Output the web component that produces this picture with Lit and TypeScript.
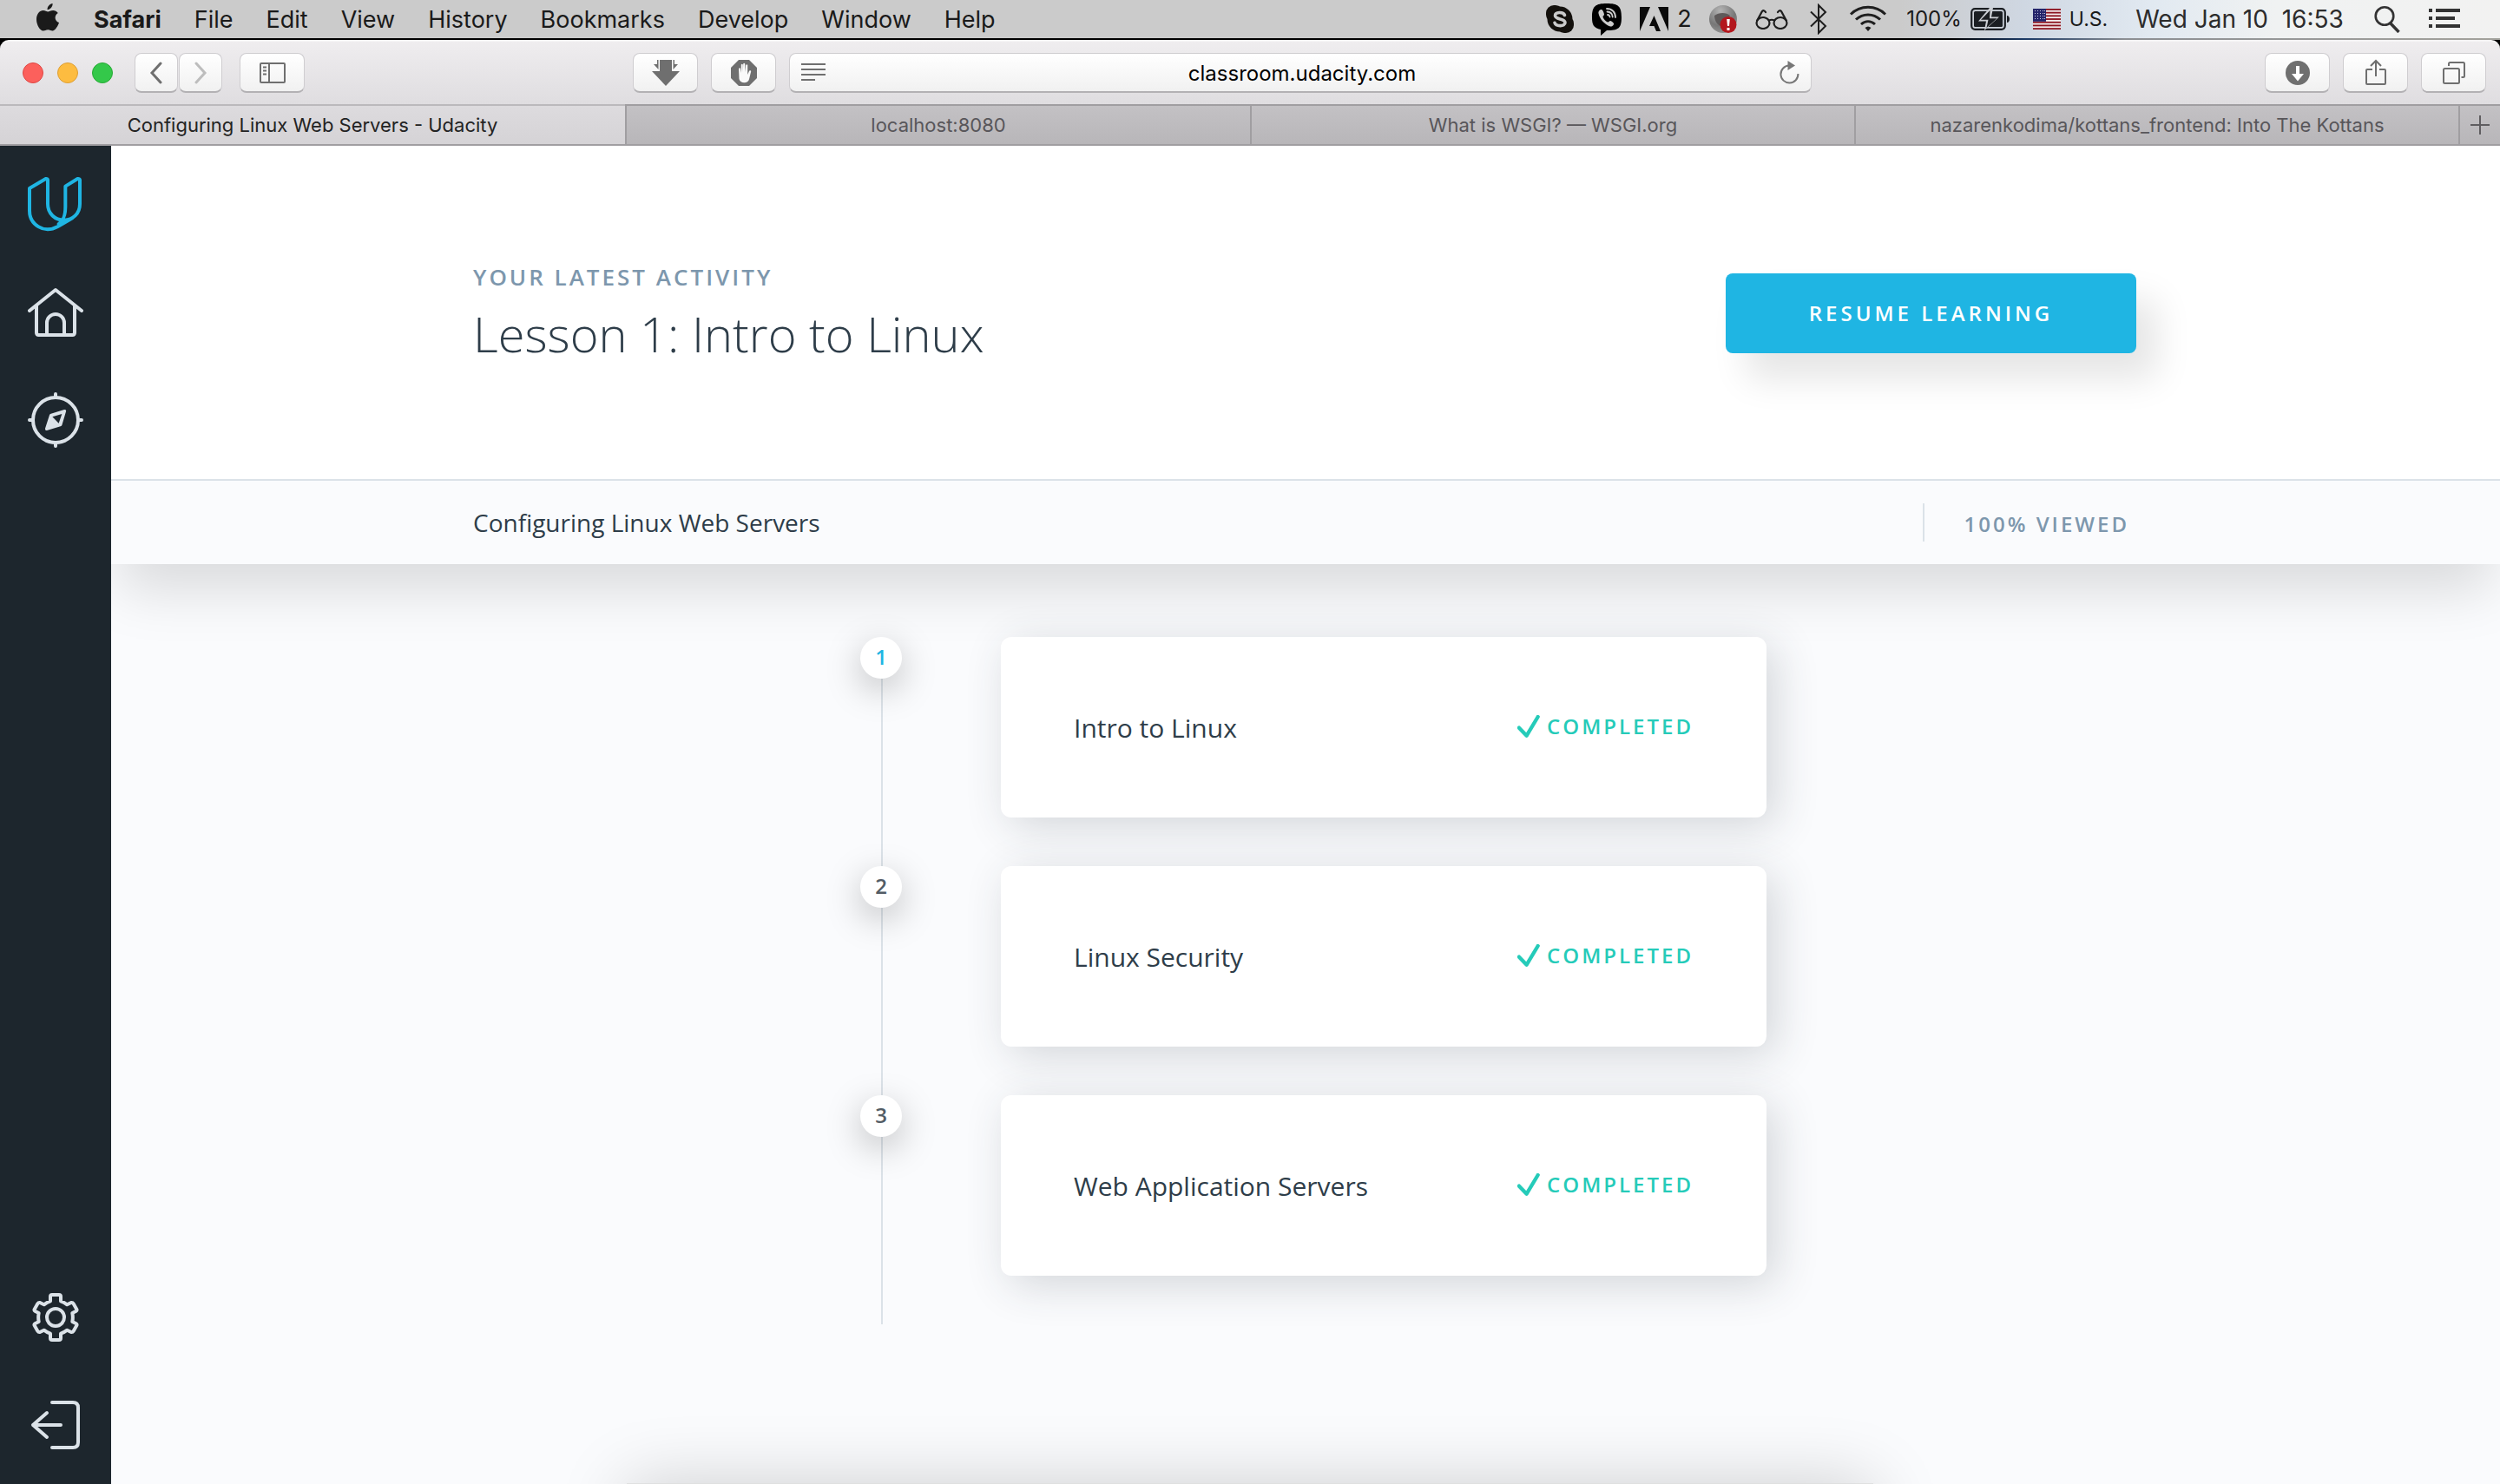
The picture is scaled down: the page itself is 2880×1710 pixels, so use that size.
import { LitElement, html, css, svg } from "lit";
import { customElement, property } from "lit/decorators.js";

const mac = css`Inter, "Liberation Sans", sans-serif`;

@customElement("mac-menubar")
class MacMenubar extends LitElement {
  static styles = css`
    :host { display: block; }
    .bar {
      display: flex; justify-content: space-between; height: 44px;
      font: 27px/46px ${mac}; color: #1a1a1a;
      background: linear-gradient(90deg, #cbcbcb 76%, #cfd7e2 81%, #e1e9f1 86%, #f0f2f2 91%, #f2f2f1 100%);
    }
    .edge { height: 2px; background: linear-gradient(90deg, #000 78%, #1c3a66 81%, #8c8f93 85%, #a3a29c 100%); }
    button { all: unset; white-space: nowrap; cursor: default; }
    .menus { display: flex; gap: 38px; padding-left: 42px; }
    .menus svg { display: block; margin: 4px 2px 0 0; }
    .app { font-weight: 700; }
    .status { display: flex; padding-right: 31px; }
    .cell { display: flex; align-items: center; justify-content: center; gap: 10px; white-space: nowrap; }
    .w48 { width: 48px; }
    .w52 { width: 52px; }
    .w56 { width: 56px; }
    .w60 { width: 60px; }
    .w66 { width: 66px; }
    .adobe { width: 80px; }
    .power { width: 142px; font-size: 24px; }
    .lang { width: 116px; font-size: 23px; }
    .clock { width: 274px; font-size: 28px; color: #2c2c2c; white-space: pre; }
  `;
  render() {
    const items = ["File", "Edit", "View", "History", "Bookmarks", "Develop", "Window", "Help"];
    return html`
      <div class="bar">
        <nav class="menus" aria-label="Menu bar">
          <svg width="26" height="32" viewBox="0 0 26 32" fill="#1a1a1a"><path d="M18.6 0c.3 3.600-2.700 7.200-6 7.200C12.200 3.800 15.400.400 18.600 0zM13.200 9.400c1.200 0 3.400-1.500 6.200-1.400 1.800.100 4.100.900 5.400 3-4.800 3.100-3.900 9.300 1.200 11.100-1.200 3.600-4.100 8.900-7.100 9.400-2.100.200-3-1.300-5.600-1.300s-3.500 1.300-5.500 1.300C4 31.500 0 24.600 0 18.300 0 11.800 3.900 8 7.600 8c2.500 0 4.300 1.400 5.600 1.400z"/></svg>
          <button class="app">Safari</button>
          ${items.map((i) => html`<button>${i}</button>`)}
        </nav>
        <div class="status">
          <span class="cell w52"><svg width="34" height="34" viewBox="0 0 34 34"><rect x="1" y="1" width="20" height="20" rx="9" fill="#14110d"/><rect x="13" y="13" width="20" height="20" rx="9" fill="#14110d"/><circle cx="17" cy="17" r="14.500" fill="#14110d"/><path d="M22.500 12.500C21 8.500 11.500 8.500 11.500 13c0 5 11.500 2.800 11.500 8 0 4.800-10.500 4.800-12 .3" fill="none" stroke="#cbcbcb" stroke-width="3.600" stroke-linecap="round"/></svg></span>
          <span class="cell w56"><svg width="36" height="38" viewBox="0 0 36 38"><path d="M18 1c13 0 17 3 17 16s-4 15-17 15l-7 6v-7C3 29 1 26 1 17 1 4 5 1 18 1z" fill="#000"/><path d="M12 8c-2 0-4 2-3.500 4.500C10 19 15 25 22 27.500c2.500.5 4.500-2 4-3.500-.5-1.200-3-3-4-3s-1.800 2-3 1.500c-2.500-1-4.800-3.500-5.500-6-.3-1.300 1.500-1.500 1.500-2.800S13.200 8 12 8z" fill="#cbcbcb"/><path d="M18 7c6 0 10 4 10 10M18.500 10.500c4 .2 6 2.500 6.200 6M19 14c1.500.2 2.300 1 2.500 2.500" fill="none" stroke="#cbcbcb" stroke-width="1.800" stroke-linecap="round"/></svg></span>
          <span class="cell adobe"><svg width="33" height="28" viewBox="0 0 33 28"><path d="M0 0h12L0 28zM21 0h12v28zM16.500 10L24 28h-5l-2.500-6h-5.500z" fill="#0b0b0b"/></svg>2</span>
          <span class="cell w52"><svg width="32" height="34" viewBox="0 0 32 34"><defs><radialGradient id="ball" cx=".4" cy=".2" r=".9"><stop offset="0" stop-color="#b4b4b4"/><stop offset=".6" stop-color="#777"/><stop offset="1" stop-color="#9a9a9a"/></radialGradient></defs><circle cx="16" cy="17" r="16" fill="url(#ball)"/><path d="M6 13c5-4 14-4 18 0l-7 13C11 26 6 20 6 13z" fill="#5e5a5a"/><circle cx="22" cy="23.500" r="9.500" fill="#b3171d"/><path d="M20.200 17h3.600l-.8 8h-2zM20.500 27h3v3h-3z" fill="#fff"/></svg></span>
          <span class="cell w60"><svg width="38" height="24" viewBox="0 0 38 24" fill="none" stroke="#1e1e1e" stroke-width="2.200" stroke-linecap="round"><ellipse cx="9" cy="16.500" rx="7.500" ry="6.500"/><ellipse cx="29" cy="16.500" rx="7.500" ry="6.500"/><path d="M16 13.500q3-1.500 6 0M2 14L8 3q2-2 4 1M36 14L30 3q-2-2-4 1"/></svg></span>
          <span class="cell w48"><svg width="20" height="36" viewBox="0 0 20 36" fill="none" stroke="#1e1e1e" stroke-width="2"><path d="M1 9.500L18 26l-8 8V2l8 8L1 26.500"/></svg></span>
          <span class="cell w66"><svg width="42" height="32" viewBox="0 0 42 32" fill="none" stroke="#1e1e1e" stroke-width="3"><path d="M1 10.500C12-.5 30-.5 41 10.500M7 16.500c8-7.500 20-7.500 28 0M13 22c5-4.500 11-4.500 16 0"/><path d="M17.500 26q3.500-3 7 0L21 30z" fill="#1e1e1e" stroke="none"/></svg></span>
          <span class="cell power">100%<svg width="46" height="26" viewBox="0 0 46 26"><rect x="1.200" y="1.200" width="38.600" height="23.600" rx="4" fill="none" stroke="#1b1e22" stroke-width="2.200"/><rect x="4" y="4" width="33" height="18" rx="1.500" fill="#1b1e22"/><path d="M42 9c4 0 4 8 0 8z" fill="#1b1e22"/><path d="M22 0L9 15.500h9L16 26l17-15.500h-9L26 0z" fill="#cccfd4"/><path d="M22.500 3L12 13.800h8.500L18.500 23l12-10.800H22z" fill="#1b1e22"/></svg></span>
          <span class="cell lang"><svg width="32" height="24" viewBox="0 0 32 24"><rect width="32" height="24" fill="#f4eeee"/>${[0, 1, 2, 3, 4, 5, 6].map((n) => svg`<rect y=${n * 3.7} width="32" height="1.850" fill="#8c1420"/>`)}<rect width="15" height="14.800" fill="#24246a"/>${[2, 5, 8, 11].map((y) => [2, 5, 8, 11, 13].map((x) => svg`<rect x=${x} y=${y} width="1" height="1" fill="#c8c8e0"/>`))}</svg>U.S.</span>
          <span class="cell clock">Wed Jan 10  16:53</span>
          <span class="cell w66"><svg width="30" height="32" viewBox="0 0 30 32" fill="none" stroke="#333" stroke-width="2.600"><circle cx="12" cy="12.500" r="10.300"/><path d="M18.500 20.500L28.500 31" stroke-width="3.400"/></svg></span>
          <span class="cell w66"><svg width="36" height="24" viewBox="0 0 36 24" fill="#333"><path d="M0 0h4v4H0zM8 0h28v4H8zM0 9h4v4H0zM8 9h22v4H8zM0 18h4v4H0zM8 18h28v4H8z"/></svg></span>
        </div>
      </div>
      <div class="edge"></div>`;
  }
}

@customElement("safari-chrome")
class SafariChrome extends LitElement {
  static styles = css`
    :host { display: block; background: #000; font-family: ${mac}; }
    .toolbar {
      display: grid; grid-template-columns: minmax(0, 703fr) minmax(0, 1358fr) minmax(0, 777fr);
      align-items: center; height: 74px; box-sizing: border-box; padding: 0 16px 0 26px;
      border-top: 2px solid #f6f5f6; border-radius: 10px 10px 0 0;
      background: linear-gradient(#efedef, #dfdde0);
    }
    .left, .middle, .right { display: flex; align-items: center; }
    .lights { display: flex; gap: 16px; margin-right: 25px; }
    .light { all: unset; box-sizing: border-box; width: 24px; height: 24px; border-radius: 50%; }
    .red { background: #fc605c; border: 1px solid #df4744; }
    .amber { background: #fdbc40; border: 1px solid #de9f34; }
    .green { background: #34c84a; border: 1px solid #27aa35; }
    .btn, .address {
      box-sizing: border-box; height: 46px; border: 1px solid #cfcdd0; border-bottom: 2px solid #b3b1b4;
      border-radius: 8px; background: linear-gradient(#fff, #f1f1f1);
    }
    .btn { width: 75px; padding: 0; display: flex; align-items: center; justify-content: center; }
    .nav { display: flex; gap: 1px; margin-right: 20px; }
    .nav .btn { width: 50px; }
    .middle { gap: 15px; }
    .address { flex: 1; display: flex; align-items: center; padding: 0 13px; }
    .address input {
      flex: 1; min-width: 0; border: 0; padding: 2px 0 0; background: none; outline: none;
      text-align: center; font: 24px/40px ${mac}; color: #000;
    }
    .icon { all: unset; display: flex; }
    .right { justify-content: flex-end; gap: 15px; }
    .tabs {
      display: grid; height: 48px; box-sizing: border-box;
      grid-template-columns: minmax(0, 720fr) minmax(0, 720fr) minmax(0, 696fr) minmax(0, 696fr) 48px;
      border-bottom: 2px solid #a09ea1;
    }
    .tab {
      box-sizing: border-box; margin: 0; border: 0; border-top: 2px solid #a09ea1; border-left: 2px solid #a09ea1;
      padding: 0; font: 22px/42px ${mac}; color: #58565a; white-space: nowrap; overflow: hidden;
      background: linear-gradient(#c3c1c4, #b8b6b9);
    }
    .tab.active { border-left: 0; border-top-color: #bbb9bc; color: #232323; background: linear-gradient(#dddbde, #d5d3d6); }
    .plus { display: flex; align-items: center; justify-content: center; }
  `;
  render() {
    return html`
      <div class="toolbar">
        <div class="left">
          <div class="lights">
            <button class="light red" aria-label="Close"></button>
            <button class="light amber" aria-label="Minimise"></button>
            <button class="light green" aria-label="Zoom"></button>
          </div>
          <div class="nav">
            <button class="btn" aria-label="Back"><svg width="16" height="26" viewBox="0 0 16 26" fill="none" stroke="#6f6f6f" stroke-width="3" stroke-linecap="round"><path d="M13 2L3 13l10 11"/></svg></button>
            <button class="btn" aria-label="Forward"><svg width="16" height="26" viewBox="0 0 16 26" fill="none" stroke="#bdbdbd" stroke-width="3" stroke-linecap="round"><path d="M3 2l10 11L3 24"/></svg></button>
          </div>
          <button class="btn" aria-label="Sidebar"><svg width="30" height="24" viewBox="0 0 30 24" fill="none" stroke="#6f6f6f" stroke-width="2"><rect x="1" y="1" width="28" height="22" rx="1"/><path d="M11 1v22M4 5.500h4M4 9.500h4M4 13.500h4"/></svg></button>
        </div>
        <div class="middle">
          <button class="btn" aria-label="Download helper"><svg width="32" height="30" viewBox="0 0 32 30" fill="#6f6f6f"><path d="M9 0h14v13h9L16 30 0 13h9zM6 0h1.500v11L2 5h4zM26 0h-1.500v11L30 5h-4z"/></svg></button>
          <button class="btn" aria-label="Content blocker"><svg width="30" height="30" viewBox="0 0 30 30"><path d="M9 0h12l9 9v12l-9 9H9l-9-9V9z" fill="#6f6f6f"/><path d="M9 10q1.500-1.500 2 0l.8 5V5.500q1-1.500 2 0V14l.4-9.500q1-1.500 2 0L16.600 14l.6-8q1.200-1.500 2 0V17l2-4.500q2-.8 2 .8l-2.200 9C20 27.500 11 28 9.500 22z" fill="#fafafa"/></svg></button>
          <div class="address">
            <button class="icon" aria-label="Reader"><svg width="28" height="22" viewBox="0 0 28 22" fill="#6f6f6f"><path d="M0 0h28v2H0zM0 6h28v2H0zM0 12h28v2H0zM0 18h16v2H0z"/></svg></button>
            <input aria-label="Address" .value=${"classroom.udacity.com"} />
            <button class="icon" aria-label="Reload"><svg width="24" height="28" viewBox="0 0 24 28"><path d="M12 5.500a10 10 0 1 0 10.400 9.500" fill="none" stroke="#777" stroke-width="2"/><path d="M10.500 0v11l8.500-5.500z" fill="#777"/></svg></button>
          </div>
        </div>
        <div class="right">
          <button class="btn" aria-label="Downloads"><svg width="28" height="28" viewBox="0 0 28 28"><circle cx="14" cy="14" r="14" fill="#6f6f6f"/><path d="M12 6h4v9h5l-7 8.500L7 15h5z" fill="#fff"/></svg></button>
          <button class="btn" aria-label="Share"><svg width="24" height="32" viewBox="0 0 24 32" fill="none" stroke="#6f6f6f" stroke-width="2"><path d="M8 12H2q-1 0-1 1v15q0 1 1 1h20q1 0 1-1V13q0-1-1-1h-6M12 20V2M6 8l6-6 6 6"/></svg></button>
          <button class="btn" aria-label="All tabs"><svg width="26" height="26" viewBox="0 0 26 26" fill="none" stroke="#6f6f6f" stroke-width="2"><rect x="1" y="8" width="18" height="17" rx="1.500"/><path d="M7 5V2.500Q7 1 8.500 1h15Q25 1 25 2.500v14q0 1.500-1.500 1.500H21.500"/></svg></button>
        </div>
      </div>
      <div class="tabs">
        <button class="tab active">Configuring Linux Web Servers - Udacity</button>
        <button class="tab">localhost:8080</button>
        <button class="tab">What is WSGI? — WSGI.org</button>
        <button class="tab">nazarenkodima/kottans_frontend: Into The Kottans</button>
        <button class="tab plus" aria-label="New tab"><svg width="22" height="22" viewBox="0 0 22 22" stroke="#5f5d60" stroke-width="2"><path d="M11 0v22M0 11h22"/></svg></button>
      </div>`;
  }
}

@customElement("class-sidebar")
class ClassSidebar extends LitElement {
  static styles = css`
    :host { display: block; flex: none; width: 128px; background: #1d262d; }
    nav { display: flex; flex-direction: column; height: 100%; box-sizing: border-box; padding: 4px 0 6px; }
    a { display: flex; align-items: center; justify-content: center; height: 124px; }
    a.logo { height: 126px; }
    .spacer { flex: 1; }
    svg { width: 64px; height: 64px; fill: none; stroke: #dbe2e8; stroke-width: 12px; stroke-linecap: round; stroke-linejoin: round; }
    .logo svg { stroke: #1fb5e3; }
    .solid { fill: #dbe2e8; fill-rule: evenodd; stroke: none; }
  `;
  render() {
    return html`<nav aria-label="Classroom">
      <a class="logo" href="#" aria-label="Udacity"><svg viewBox="96 99 192 192"><path d="M102 220V141L158 108Q165 107 165 112V195C165 228 190 251 221 251C252 251 276 228 276 195V112Q276 107 268 108L226 134V205C226 237 219 252 203 264M250 244L200 273C150 300 102 265 102 218"/></svg></a>
      <a href="#" aria-label="Home"><svg viewBox="96 474 192 192"><path d="M102 564L192 492L282 564M126 547V640Q126 648 134 648H250Q258 648 258 640V547M162 645V606a30 30 0 0 1 60 0V645"/></svg></a>
      <a href="#" aria-label="Catalog"><svg viewBox="96 846 192 192"><circle cx="192" cy="942" r="78"/><path d="M192 852v8M192 1024v8M102 942h8M274 942h8"/><path class="solid" d="M176 920L222 906Q230 905 228 913L214 960Q213 963 209 964L162 978Q155 979 156 971L171 925Q172 921 176 920zM181 931L203 953L214 921z"/></svg></a>
      <span class="spacer"></span>
      <a href="#" aria-label="Settings"><svg viewBox="96 138 192 192"><circle cx="192" cy="234" r="30"/><path d="M174 178V162q0-6 6-6h24q6 0 6 6V178Q222 182 232 190L246 183Q251 182 254 187L265 206Q267 210 262 213L250 219Q253 234 250 249L262 255Q267 258 265 262L254 281Q251 286 246 285L232 278Q222 286 210 290V306q0 6-6 6h-24q-6 0-6-6V290Q162 286 152 278L138 285Q133 286 130 281L119 262Q117 258 122 255L134 249Q131 234 134 219L122 213Q117 210 119 206L130 187Q133 182 138 183L152 190Q162 182 174 178Z"/></svg></a>
      <a href="#" aria-label="Sign out"><svg viewBox="96 510 192 192"><path d="M180 528H252Q270 528 270 546V666Q270 684 252 684H180M210 606H114M162 564L114 606L162 648"/></svg></a>
    </nav>`;
  }
}

@customElement("lesson-row")
class LessonRow extends LitElement {
  @property({ type: Number }) number = 1;
  @property() name = "";
  @property({ type: Boolean }) current = false;
  static styles = css`
    :host { display: grid; grid-template-columns: 48px minmax(0, 1fr); column-gap: 114px; }
    .rail { display: flex; flex-direction: column; align-items: center; }
    .num {
      width: 48px; height: 48px; border-radius: 50%; background: #fff; text-align: center;
      font: 600 24px/46px "Open Sans", sans-serif; color: #525c65;
      box-shadow: 0 12px 40px rgba(0, 0, 0, .25);
    }
    .num.current { color: #1fb5e3; }
    .line { flex: 1; width: 2px; margin-left: 2px; background: #dbe2e8; position: relative; z-index: -1; }
    .card {
      display: flex; align-items: center; justify-content: space-between; height: 208px; box-sizing: border-box;
      margin-bottom: 56px; padding: 0 84px; border-radius: 12px; background: #fff; text-decoration: none;
      box-shadow: 10px 10px 50px rgba(40, 55, 62, .19);
    }
    .name { font: 400 30px/40px "Open Sans", sans-serif; color: #2e3d49; padding-top: 2px; }
    .done { display: flex; align-items: center; gap: 8px; padding-bottom: 3px; font: 600 24px/40px "Open Sans", sans-serif; letter-spacing: 3px; color: #25cbb9; }
  `;
  render() {
    return html`
      <div class="rail"><div class="num ${this.current ? "current" : ""}">${this.number}</div><div class="line"></div></div>
      <a class="card" href="#">
        <span class="name">${this.name}</span>
        <span class="done"><svg width="26" height="26" viewBox="144 372 78 78" fill="none" stroke="#25cbb9" stroke-width="13" stroke-linecap="round" stroke-linejoin="round"><path d="M150 416L176 443L215 378"/></svg>COMPLETED</span>
      </a>`;
  }
}

@customElement("app-root")
class AppRoot extends LitElement {
  static styles = css`
    :host { display: flex; flex-direction: column; min-height: 100vh; font-family: "Open Sans", sans-serif; color: #2e3d49; }
    .body { flex: 1; display: flex; }
    main { flex: 1; min-width: 0; display: flex; flex-direction: column; background: #fafbfd; overflow: hidden; }
    .top { box-shadow: 0 40px 60px -10px rgba(0, 0, 0, .13); }
    .hero { background: #fff; border-bottom: 2px solid #dbe2e8; }
    .hero, .course { padding-right: 2px; }
    .wrap { max-width: 1916px; margin: 0 auto; display: flex; align-items: center; justify-content: space-between; box-sizing: border-box; }
    .hero .wrap { height: 384px; padding-top: 2px; }
    .latest { padding-top: 10px; }
    .kicker { margin: 0; font-size: 26px; line-height: 36px; font-weight: 600; letter-spacing: 3px; color: #7d97ad; }
    h1 { margin: 0; font-size: 56px; line-height: 94px; font-weight: 300; }
    .resume {
      width: 473px; height: 92px; border: 0; border-radius: 8px; background: #1fb5e3; color: #fff;
      font: 600 24px/40px "Open Sans", sans-serif; letter-spacing: 4px;
      box-shadow: 24px 30px 40px rgba(0, 0, 0, .1);
    }
    .course { background: #fafbfd; }
    .course .wrap { height: 96px; }
    h2 { margin: 0; font-size: 28px; line-height: 40px; font-weight: 400; }
    .viewed { font-size: 24px; line-height: 40px; font-weight: 600; letter-spacing: 3px; color: #7d97ad; border-left: 2px solid #dbe2e8; padding: 4px 8px 0 46px; }
    .lessons { width: 1062px; box-sizing: border-box; margin: 84px auto 0; padding-left: 18px; position: relative; z-index: 0; }
    .dock { display: flex; justify-content: center; height: 1px; margin-top: auto; padding-right: 128px; }
    .sheet { width: 1436px; height: 120px; background: #dfe0e0; box-shadow: 0 0 80px rgba(0, 0, 0, .18); }
  `;
  render() {
    const lessons = ["Intro to Linux", "Linux Security", "Web Application Servers"];
    return html`
      <mac-menubar></mac-menubar>
      <safari-chrome></safari-chrome>
      <div class="body">
        <class-sidebar></class-sidebar>
        <main>
          <header class="top">
            <section class="hero"><div class="wrap">
              <div class="latest">
                <p class="kicker">YOUR LATEST ACTIVITY</p>
                <h1>Lesson 1: Intro to Linux</h1>
              </div>
              <button class="resume">RESUME LEARNING</button>
            </div></section>
            <section class="course"><div class="wrap">
              <h2>Configuring Linux Web Servers</h2>
              <span class="viewed">100% VIEWED</span>
            </div></section>
          </header>
          <section class="lessons">
            ${lessons.map((name, i) => html`<lesson-row .number=${i + 1} .name=${name} .current=${i === 0}></lesson-row>`)}
          </section>
          <div class="dock"><div class="sheet"></div></div>
        </main>
      </div>`;
  }
}
